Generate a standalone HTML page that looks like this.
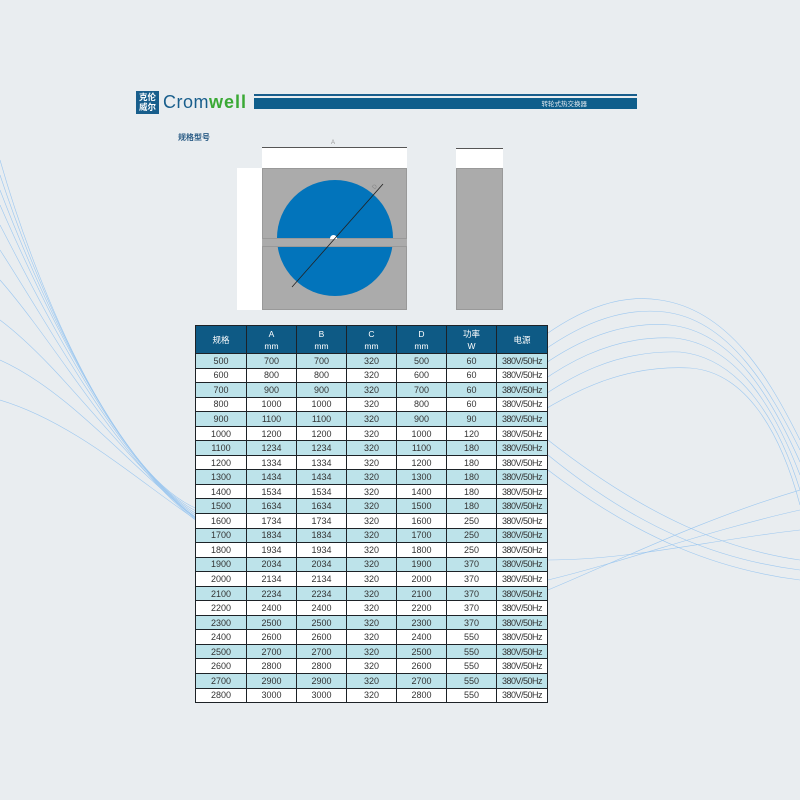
<!DOCTYPE html>
<html><head><meta charset="utf-8"><style>
*{margin:0;padding:0;box-sizing:border-box}
body{width:800px;height:800px;background:#e9edf0;position:relative;overflow:hidden;font-family:"Liberation Sans","Noto Sans CJK SC",sans-serif}
.abs{position:absolute}
table{position:absolute;left:195px;top:325px;width:352px;border-collapse:collapse;table-layout:fixed}
td{border:1.5px solid #1d2227;height:14.55px;font-size:9px;color:#333;text-align:center;line-height:12px;padding:0;overflow:hidden;white-space:nowrap}
tr.h td{background:#0e5a85;color:#fff;height:28px;font-size:8.5px;line-height:12px}
tr.b td{background:#bde3ea}
tr.w td{background:#fff}
td.p{font-size:9px;letter-spacing:-0.5px}
</style></head><body>
<svg class="abs" style="left:0;top:0" width="800" height="800" fill="none" stroke="#7db8ef" stroke-width="0.6" opacity="0.7">
<g>
<path d="M0 160 C40 300 120 480 200 510 C260 530 330 520 380 530"/>
<path d="M0 175 C45 310 125 485 205 515 C265 535 330 530 380 540"/>
<path d="M0 190 C50 320 130 490 210 520 C270 540 330 540 380 550"/>
<path d="M0 205 C55 330 135 495 215 525 C275 545 330 550 380 560"/>
<path d="M0 225 C60 340 140 500 220 530 C280 550 330 560 380 570"/>
<path d="M0 250 C65 350 145 505 225 535 C285 555 330 570 380 580"/>
<path d="M0 280 C70 360 150 510 230 540 C290 560 330 580 380 590"/>
<path d="M0 320 C80 380 160 515 240 545 C300 565 330 590 380 600"/>
<path d="M0 360 C90 400 170 520 250 550"/>
<path d="M0 400 C100 430 180 525 260 555"/>
</g>
<g>
<path d="M470 400 C540 330 600 290 660 300 C730 310 770 380 800 440"/>
<path d="M480 405 C545 340 605 305 665 312 C730 320 770 390 800 450"/>
<path d="M490 410 C550 350 610 320 670 325 C735 332 772 400 800 462"/>
<path d="M500 415 C560 360 615 335 675 338 C738 345 775 410 800 475"/>
<path d="M510 420 C570 372 620 350 680 352 C740 358 778 420 800 490"/>
<path d="M520 425 C580 385 630 365 690 368 C745 372 780 430 800 505"/>
<path d="M548 590 C620 560 700 520 800 490"/>
<path d="M548 580 C630 560 710 530 800 510"/>
<path d="M548 560 C630 560 710 540 800 530"/>
<path d="M548 470 C640 540 720 570 800 580"/>
<path d="M548 455 C640 530 720 560 800 570"/>
<path d="M548 440 C650 520 730 550 800 560"/>
</g>
</svg>
<div class="abs" style="left:136px;top:91px;width:23px;height:23px;background:#185e8c;color:#fff;font-size:8.5px;line-height:10px;text-align:center;padding-top:1px;font-weight:bold;font-family:'Noto Sans CJK SC',sans-serif">克伦<br>威尔</div>
<div class="abs" style="left:163px;top:92px;font-size:18px;color:#185e8c;letter-spacing:0.5px">Crom<span style="color:#3aa935;font-weight:bold;letter-spacing:1px">well</span></div>
<div class="abs" style="left:254px;top:94px;width:383px;height:1.5px;background:#185e8c"></div>
<div class="abs" style="left:254px;top:98px;width:383px;height:11px;background:#0f5e8b;color:#dfe8ef;font-size:6.5px;line-height:11px;text-align:right;padding-right:50px;font-family:'Noto Sans CJK SC',sans-serif">转轮式热交换器</div>
<div class="abs" style="left:178px;top:132px;font-size:8px;color:#2c5d86;font-weight:bold;font-family:'Noto Sans CJK SC',sans-serif">规格型号</div>
<div class="abs" style="left:262px;top:148px;width:145px;height:20px;background:#fff"></div>
<div class="abs" style="left:262px;top:147px;width:145px;height:1px;background:#555"></div>
<div class="abs" style="left:331px;top:140px;font-size:6px;color:#999">A</div>
<div class="abs" style="left:237px;top:168px;width:25px;height:142px;background:#fff"></div>
<div class="abs" style="left:262px;top:168px;width:145px;height:142px;background:#ababab;border:1px solid #999"></div>
<div class="abs" style="left:277px;top:180px;width:116px;height:116px;border-radius:50%;background:#0274bb"></div>
<div class="abs" style="left:262px;top:238px;width:145px;height:9px;background:#ababab;border-top:1px solid #999;border-bottom:1px solid #999"></div>
<div class="abs" style="left:330px;top:235px;width:7px;height:4px;border-radius:4px 4px 0 0;background:#fff"></div>
<svg class="abs" style="left:0;top:0" width="800" height="340"><line x1="292" y1="287" x2="383" y2="184" stroke="#222" stroke-width="0.8"/><text x="372" y="188" font-size="6" fill="#888" font-family="Liberation Sans" transform="rotate(-50 375 186)">D</text></svg>
<div class="abs" style="left:456px;top:149px;width:47px;height:19px;background:#fff"></div>
<div class="abs" style="left:456px;top:148px;width:47px;height:1px;background:#555"></div>
<div class="abs" style="left:456px;top:168px;width:47px;height:142px;background:#ababab;border:1px solid #999"></div>
<table>
<colgroup><col style="width:51px"><col style="width:50px"><col style="width:50px"><col style="width:50px"><col style="width:50px"><col style="width:50px"><col style="width:51px"></colgroup>
<tr class="h"><td>规格</td><td>A<br>mm</td><td>B<br>mm</td><td>C<br>mm</td><td>D<br>mm</td><td>功率<br>W</td><td>电源</td></tr>
<tr class="b"><td>500</td><td>700</td><td>700</td><td>320</td><td>500</td><td>60</td><td class="p">380V/50Hz</td></tr>
<tr class="w"><td>600</td><td>800</td><td>800</td><td>320</td><td>600</td><td>60</td><td class="p">380V/50Hz</td></tr>
<tr class="b"><td>700</td><td>900</td><td>900</td><td>320</td><td>700</td><td>60</td><td class="p">380V/50Hz</td></tr>
<tr class="w"><td>800</td><td>1000</td><td>1000</td><td>320</td><td>800</td><td>60</td><td class="p">380V/50Hz</td></tr>
<tr class="b"><td>900</td><td>1100</td><td>1100</td><td>320</td><td>900</td><td>90</td><td class="p">380V/50Hz</td></tr>
<tr class="w"><td>1000</td><td>1200</td><td>1200</td><td>320</td><td>1000</td><td>120</td><td class="p">380V/50Hz</td></tr>
<tr class="b"><td>1100</td><td>1234</td><td>1234</td><td>320</td><td>1100</td><td>180</td><td class="p">380V/50Hz</td></tr>
<tr class="w"><td>1200</td><td>1334</td><td>1334</td><td>320</td><td>1200</td><td>180</td><td class="p">380V/50Hz</td></tr>
<tr class="b"><td>1300</td><td>1434</td><td>1434</td><td>320</td><td>1300</td><td>180</td><td class="p">380V/50Hz</td></tr>
<tr class="w"><td>1400</td><td>1534</td><td>1534</td><td>320</td><td>1400</td><td>180</td><td class="p">380V/50Hz</td></tr>
<tr class="b"><td>1500</td><td>1634</td><td>1634</td><td>320</td><td>1500</td><td>180</td><td class="p">380V/50Hz</td></tr>
<tr class="w"><td>1600</td><td>1734</td><td>1734</td><td>320</td><td>1600</td><td>250</td><td class="p">380V/50Hz</td></tr>
<tr class="b"><td>1700</td><td>1834</td><td>1834</td><td>320</td><td>1700</td><td>250</td><td class="p">380V/50Hz</td></tr>
<tr class="w"><td>1800</td><td>1934</td><td>1934</td><td>320</td><td>1800</td><td>250</td><td class="p">380V/50Hz</td></tr>
<tr class="b"><td>1900</td><td>2034</td><td>2034</td><td>320</td><td>1900</td><td>370</td><td class="p">380V/50Hz</td></tr>
<tr class="w"><td>2000</td><td>2134</td><td>2134</td><td>320</td><td>2000</td><td>370</td><td class="p">380V/50Hz</td></tr>
<tr class="b"><td>2100</td><td>2234</td><td>2234</td><td>320</td><td>2100</td><td>370</td><td class="p">380V/50Hz</td></tr>
<tr class="w"><td>2200</td><td>2400</td><td>2400</td><td>320</td><td>2200</td><td>370</td><td class="p">380V/50Hz</td></tr>
<tr class="b"><td>2300</td><td>2500</td><td>2500</td><td>320</td><td>2300</td><td>370</td><td class="p">380V/50Hz</td></tr>
<tr class="w"><td>2400</td><td>2600</td><td>2600</td><td>320</td><td>2400</td><td>550</td><td class="p">380V/50Hz</td></tr>
<tr class="b"><td>2500</td><td>2700</td><td>2700</td><td>320</td><td>2500</td><td>550</td><td class="p">380V/50Hz</td></tr>
<tr class="w"><td>2600</td><td>2800</td><td>2800</td><td>320</td><td>2600</td><td>550</td><td class="p">380V/50Hz</td></tr>
<tr class="b"><td>2700</td><td>2900</td><td>2900</td><td>320</td><td>2700</td><td>550</td><td class="p">380V/50Hz</td></tr>
<tr class="w"><td>2800</td><td>3000</td><td>3000</td><td>320</td><td>2800</td><td>550</td><td class="p">380V/50Hz</td></tr>
</table>
</body></html>
